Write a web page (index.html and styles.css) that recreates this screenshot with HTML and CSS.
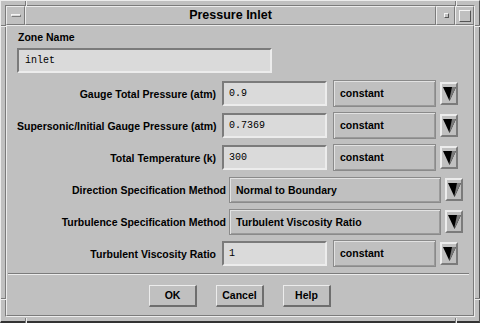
FILE: index.html
```html
<!DOCTYPE html>
<html>
<head>
<meta charset="utf-8">
<link rel="stylesheet" href="styles.css">
</head>
<body>
<div class="win">
  <span class="notch nv" style="left:24px;top:0"></span>
  <span class="notch nv" style="left:454px;top:0"></span>
  <span class="notch nh" style="left:0;top:24px"></span>
  <span class="notch nh" style="left:474px;top:24px"></span>
  <span class="notch nh" style="left:0;top:297px"></span>
  <span class="notch nh" style="left:474px;top:297px"></span>
  <span class="notch nv" style="left:24px;top:317px"></span>
  <span class="notch nv" style="left:454px;top:317px"></span>
  <div class="inner">
    <div class="titlebar">
      <div class="tbtn menu"><span class="menubar"></span></div>
      <div class="title">Pressure Inlet</div>
      <div class="tbtn"><span class="minsq"></span></div>
      <div class="tbtn"><span class="maxsq"></span></div>
    </div>
    <div class="client">
      <div class="zlabel">Zone Name</div>
      <div class="field zfield">inlet</div>

      <div class="row">
        <div class="label">Gauge Total Pressure (atm)</div>
        <div class="field num">0.9</div>
        <div class="opt small">constant</div>
        <div class="arrow"><svg width="13" height="14" viewBox="0 0 13 14"><polygon points="0,0 13,0 6.5,14" fill="#000"/><polygon points="9,0 13,0 6.5,14 6.5,12" fill="#7b7b7b"/></svg></div>
      </div>
      <div class="row">
        <div class="label">Supersonic/Initial Gauge Pressure (atm)</div>
        <div class="field num">0.7369</div>
        <div class="opt small">constant</div>
        <div class="arrow"><svg width="13" height="14" viewBox="0 0 13 14"><polygon points="0,0 13,0 6.5,14" fill="#000"/><polygon points="9,0 13,0 6.5,14 6.5,12" fill="#7b7b7b"/></svg></div>
      </div>
      <div class="row">
        <div class="label">Total Temperature (k)</div>
        <div class="field num">300</div>
        <div class="opt small">constant</div>
        <div class="arrow"><svg width="13" height="14" viewBox="0 0 13 14"><polygon points="0,0 13,0 6.5,14" fill="#000"/><polygon points="9,0 13,0 6.5,14 6.5,12" fill="#7b7b7b"/></svg></div>
      </div>
      <div class="row">
        <div class="label wide">Direction Specification Method</div>
        <div class="opt big">Normal to Boundary</div>
        <div class="arrow"><svg width="13" height="14" viewBox="0 0 13 14"><polygon points="0,0 13,0 6.5,14" fill="#000"/><polygon points="9,0 13,0 6.5,14 6.5,12" fill="#7b7b7b"/></svg></div>
      </div>
      <div class="row">
        <div class="label wide">Turbulence Specification Method</div>
        <div class="opt big">Turbulent Viscosity Ratio</div>
        <div class="arrow"><svg width="13" height="14" viewBox="0 0 13 14"><polygon points="0,0 13,0 6.5,14" fill="#000"/><polygon points="9,0 13,0 6.5,14 6.5,12" fill="#7b7b7b"/></svg></div>
      </div>
      <div class="row">
        <div class="label">Turbulent Viscosity Ratio</div>
        <div class="field num">1</div>
        <div class="opt small">constant</div>
        <div class="arrow"><svg width="13" height="14" viewBox="0 0 13 14"><polygon points="0,0 13,0 6.5,14" fill="#000"/><polygon points="9,0 13,0 6.5,14 6.5,12" fill="#7b7b7b"/></svg></div>
      </div>

      <div class="sep"></div>
      <div class="buttons">
        <div class="btn">OK</div>
        <div class="btn">Cancel</div>
        <div class="btn">Help</div>
      </div>
    </div>
  </div>
</div>
</body>
</html>
```

FILE: styles.css
```css
html, body {
  margin: 0;
  padding: 0;
  background: #c0c0c0;
}
body {
  font-family: "Liberation Sans", Arial, sans-serif;
  font-weight: bold;
  font-size: 10.5px;
  color: #000;
}
.win {
  position: relative;
  width: 480px;
  height: 323px;
  box-sizing: border-box;
  border-top: 1px solid #ececec;
  border-left: 1px solid #ececec;
  border-right: 1px solid #555;
  border-bottom: 2px solid #333;
  padding: 4px;
  background: #c0c0c0;
}
.notch {
  position: absolute;
  display: block;
}
.nv {
  width: 1px;
  height: 5px;
  background: #7b7b7b;
  box-shadow: 1px 0 0 #ececec;
}
.nh {
  width: 5px;
  height: 1px;
  background: #7b7b7b;
  box-shadow: 0 1px 0 #ececec;
}
.inner {
  height: 100%;
  box-sizing: border-box;
  border-top: 1px solid #7b7b7b;
  border-left: 1px solid #7b7b7b;
  border-right: 1px solid #ececec;
  border-bottom: 1px solid #ececec;
  display: flex;
  flex-direction: column;
}
.titlebar {
  display: flex;
  height: 19px;
  flex: none;
}
.tbtn, .title {
  box-sizing: border-box;
  border-top: 1px solid #ececec;
  border-left: 1px solid #ececec;
  border-right: 1px solid #7b7b7b;
  border-bottom: 1px solid #7b7b7b;
  height: 19px;
}
.tbtn {
  width: 19px;
  display: flex;
  align-items: center;
  justify-content: center;
}
.title {
  flex: 1;
  text-align: center;
  font-size: 12.5px;
  line-height: 17px;
}
.menubar {
  width: 10px;
  height: 3px;
  box-sizing: border-box;
  border-top: 1px solid #f4f4f4;
  border-left: 1px solid #f4f4f4;
  border-right: 1px solid #7b7b7b;
  border-bottom: 1px solid #7b7b7b;
  background: #d8d8d8;
}
.minsq {
  width: 5px;
  height: 5px;
  box-sizing: border-box;
  border-top: 1px solid #f4f4f4;
  border-left: 1px solid #f4f4f4;
  border-right: 1px solid #555;
  border-bottom: 1px solid #555;
  margin-left: 1px;
}
.maxsq {
  width: 12px;
  height: 12px;
  box-sizing: border-box;
  border-top: 1px solid #f4f4f4;
  border-left: 1px solid #f4f4f4;
  border-right: 1px solid #555;
  border-bottom: 1px solid #555;
}
.client {
  flex: 1;
  box-sizing: border-box;
  border-top: 1px solid #ececec;
  border-left: 1px solid #ececec;
  border-right: 1px solid #7b7b7b;
  border-bottom: 1px solid #7b7b7b;
  padding: 5px 0 0 10px;
}
.zlabel {
  padding-left: 1px;
  line-height: 13px;
  height: 13px;
}
.field {
  box-sizing: border-box;
  height: 25px;
  background: #dadada;
  border-top: 2px solid #7b7b7b;
  border-left: 2px solid #7b7b7b;
  border-right: 2px solid #ececec;
  border-bottom: 2px solid #ececec;
  font-family: "Liberation Mono", "Courier New", monospace;
  font-weight: normal;
  font-size: 10px;
  line-height: 21px;
  padding-left: 5px;
}
.zfield {
  width: 255px;
  margin-top: 4px;
  padding-left: 6px;
}
.row {
  display: flex;
  align-items: center;
  height: 27px;
  margin-top: 5px;
}
.row:first-of-type {
  margin-top: 7px;
}
.zfield + .row {
  margin-top: 7px;
}
.label {
  width: 199px;
  text-align: right;
  white-space: nowrap;
  flex: none;
}
.label.wide {
  width: 209px;
  margin-right: 3px;
}
.field.num {
  width: 105px;
  margin-left: 6px;
  flex: none;
}
.opt {
  box-sizing: border-box;
  height: 27px;
  border: 1px solid #8a8a8a;
  box-shadow: inset 1px 1px 0 #e2e2e2, inset -1px -1px 0 #9a9a9a;
  line-height: 25px;
  padding-left: 6px;
  flex: none;
}
.opt.small {
  width: 103px;
  margin-left: 6px;
}
.opt.big {
  width: 212px;
  height: 26px;
  line-height: 24px;
}
.arrow {
  box-sizing: border-box;
  width: 18px;
  height: 23px;
  margin-left: 4px;
  border-top: 2px solid #ececec;
  border-left: 2px solid #ececec;
  border-right: 2px solid #7b7b7b;
  border-bottom: 2px solid #7b7b7b;
  display: flex;
  align-items: center;
  justify-content: center;
  flex: none;
}
.arrow svg {
  display: block;
}
.sep {
  margin: 6px 4px 0 -9px;
  height: 1px;
  background: #7b7b7b;
  border-bottom: 1px solid #ececec;
  width: 461px;
}
.buttons {
  display: flex;
  justify-content: center;
  gap: 19px;
  margin-top: 10px;
  margin-left: -10px;
}
.btn {
  box-sizing: border-box;
  width: 48px;
  height: 22px;
  border-top: 1px solid #ececec;
  border-left: 1px solid #ececec;
  border-right: 2px solid #6e6e6e;
  border-bottom: 2px solid #6e6e6e;
  text-align: center;
  line-height: 19px;
}
```
